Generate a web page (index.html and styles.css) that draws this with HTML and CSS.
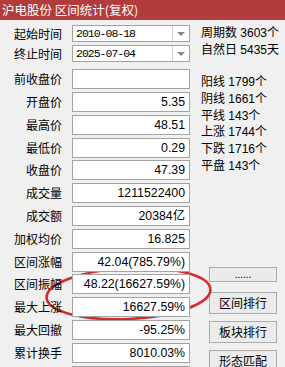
FILE: index.html
```html
<!DOCTYPE html>
<html lang="zh-CN">
<head>
    <meta charset="UTF-8">
    <title>区间统计</title>
    <link rel="stylesheet" href="styles.css">
</head>
<body>
    <div class="titlebar">沪电股份 区间统计(复权)</div>

    <div class="main">
        <div class="form">
            <div class="row combo-row">
                <span class="label">起始时间</span>
                <div class="combo"><span class="date">2010-08-18</span><span class="arrow"></span></div>
            </div>
            <div class="row combo-row">
                <span class="label">终止时间</span>
                <div class="combo"><span class="date">2025-07-04</span><span class="arrow"></span></div>
            </div>
            <div class="row first"><span class="label">前收盘价</span><div class="field"></div></div>
            <div class="row"><span class="label">开盘价</span><div class="field">5.35</div></div>
            <div class="row"><span class="label">最高价</span><div class="field">48.51</div></div>
            <div class="row"><span class="label">最低价</span><div class="field">0.29</div></div>
            <div class="row"><span class="label">收盘价</span><div class="field">47.39</div></div>
            <div class="row"><span class="label">成交量</span><div class="field">1211522400</div></div>
            <div class="row"><span class="label">成交额</span><div class="field">20384亿</div></div>
            <div class="row"><span class="label">加权均价</span><div class="field">16.825</div></div>
            <div class="row"><span class="label">区间涨幅</span><div class="field">42.04(785.79%)</div></div>
            <div class="row"><span class="label">区间振幅</span><div class="field">48.22(16627.59%)</div></div>
            <div class="row"><span class="label">最大上涨</span><div class="field">16627.59%</div></div>
            <div class="row"><span class="label">最大回撤</span><div class="field">-95.25%</div></div>
            <div class="row"><span class="label">累计换手</span><div class="field">8010.03%</div></div>
            <div class="row"><span class="label"></span><div class="field"></div></div>
        </div>

        <div class="side">
            <div class="stats period">
                <div>周期数 3603个</div>
                <div>自然日 5435天</div>
            </div>
            <div class="stats counts">
                <div>阳线 1799个</div>
                <div>阴线 1661个</div>
                <div>平线 143个</div>
                <div>上涨 1744个</div>
                <div>下跌 1716个</div>
                <div>平盘 143个</div>
            </div>
            <div class="buttons">
                <button class="btn btn-more">......</button>
                <button class="btn">区间排行</button>
                <button class="btn">板块排行</button>
                <button class="btn">形态匹配</button>
            </div>
        </div>

        <!-- hand-drawn highlight round the amplitude rows -->
        <svg class="mark" width="285" height="347" viewBox="0 20 285 347">
            <ellipse cx="128.5" cy="293.5" rx="82" ry="25.5" transform="rotate(-3 128.5 293.5)"
                     fill="none" stroke="#d42a2c" stroke-width="2.6"/>
        </svg>
    </div>
</body>
</html>
```

FILE: styles.css
```css
body {
    margin: 0;
    background-color: #f0f0f0;
    font-family: "Noto Sans CJK SC", "Liberation Sans", sans-serif;
    font-size: 12px;
    color: #000;
    overflow: hidden;
    height: 367px;
}

.titlebar {
    height: 20px;
    line-height: 20px;
    background-color: #b23b3c;
    color: #fff;
    font-size: 12.5px;
    padding-left: 2px;
    white-space: nowrap;
}

.main {
    position: relative;
    display: grid;
    grid-template-columns: 190px 95px;
}

.form {
    display: flex;
    flex-direction: column;
    padding-top: 5px;
    position: relative;
    z-index: 1;
}

.row {
    display: grid;
    grid-template-columns: 62px 118px;
    column-gap: 10px;
    align-items: center;
    margin-top: 2.8px;
}

.combo-row {
    margin-top: 0;
}

.combo-row + .combo-row {
    margin-top: 3.3px;
}

.row.first {
    margin-top: 7px;
}

.label {
    text-align: right;
    white-space: nowrap;
    line-height: 16px;
}

.combo {
    height: 17px;
    box-sizing: border-box;
    border: 1px solid #a3a3a3;
    background-color: #fff;
    display: flex;
    align-items: center;
    position: relative;
}

.date {
    font-family: "Liberation Mono", monospace;
    font-size: 11.5px;
    letter-spacing: -1px;
    padding-left: 3px;
    flex: 1;
}

.arrow {
    width: 16px;
    height: 100%;
    border-left: 1px solid #d0d0d0;
    display: flex;
    align-items: center;
    justify-content: center;
}

.arrow::after {
    content: '';
    border-style: solid;
    border-width: 4px 4px 0;
    border-color: #888 transparent;
}

.field {
    height: 20px;
    box-sizing: border-box;
    border: 1px solid #a3a3a3;
    background-color: #fff;
    text-align: right;
    padding-right: 4px;
    font-family: "Liberation Sans", "Noto Sans CJK SC", sans-serif;
    font-size: 12.3px;
    line-height: 18px;
    white-space: nowrap;
}

.side {
    display: flex;
    flex-direction: column;
}

.stats {
    padding-left: 11px;
    white-space: nowrap;
    font-family: "Liberation Sans", "Noto Sans CJK SC", sans-serif;
    font-size: 12px;
}

.period {
    margin-top: 5px;
    line-height: 16.8px;
}

.counts {
    margin-top: 15.5px;
    line-height: 16.8px;
}

.buttons {
    display: flex;
    flex-direction: column;
    padding-left: 19px;
    margin-top: 92px;
}

.btn {
    width: 68px;
    height: 22px;
    margin: 0 0 7px;
    padding: 0;
    box-sizing: border-box;
    border: 1px solid #acacac;
    border-radius: 0;
    background-color: #ebebeb;
    font-family: "Noto Sans CJK SC", sans-serif;
    font-size: 12px;
    color: #000;
    line-height: 18px;
}

.btn-more {
    height: 15px;
    line-height: 10px;
    margin-bottom: 10px;
    font-size: 10px;
}

.mark {
    position: absolute;
    left: 0;
    top: 0;
    z-index: 0;
}
```
